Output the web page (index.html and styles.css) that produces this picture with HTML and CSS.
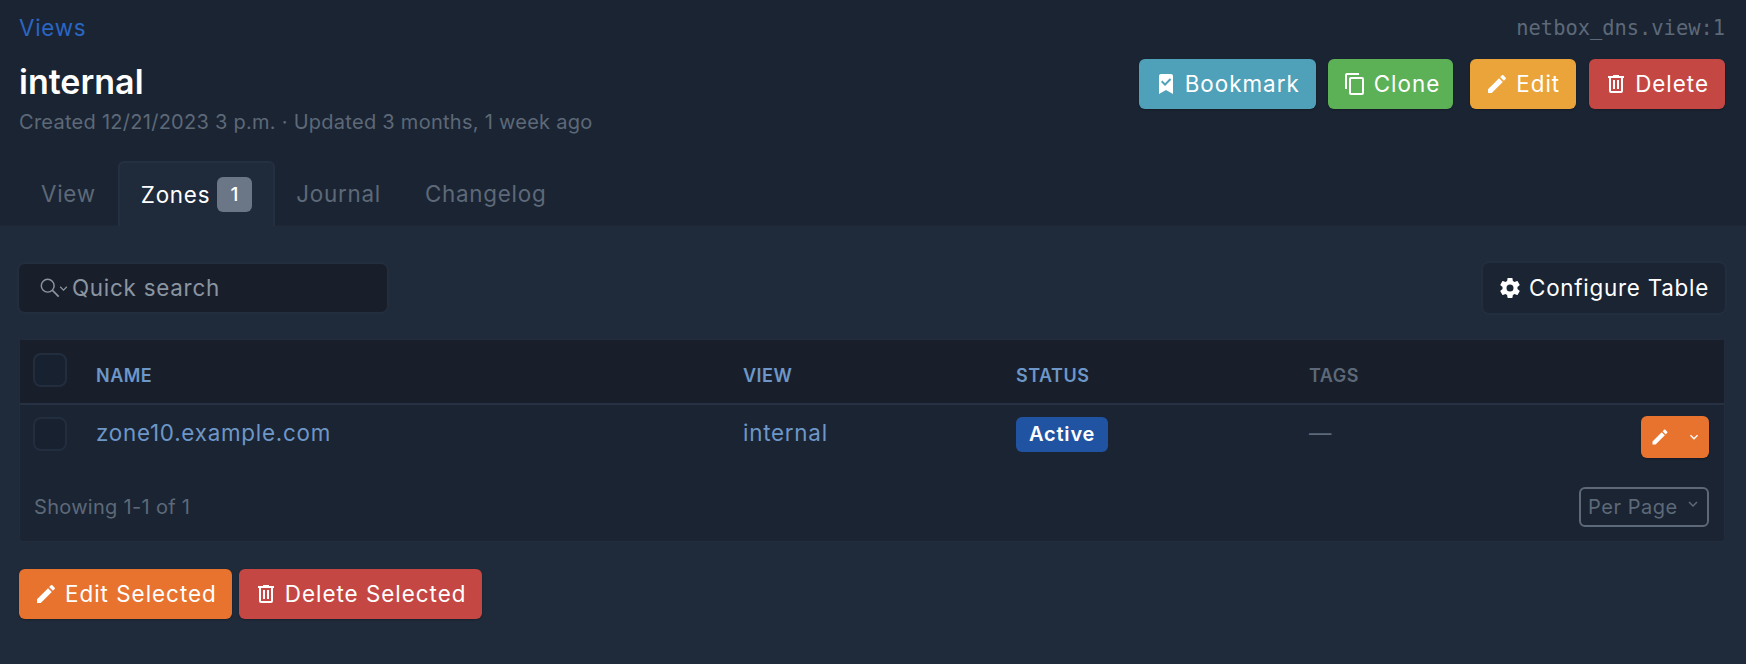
FILE: index.html
```html
<!DOCTYPE html>
<html lang="en">
<head>
    <meta charset="UTF-8">
    <meta name="viewport" content="width=device-width, initial-scale=1.0">
    <title>internal - Views</title>
    <link rel="stylesheet" href="styles.css">
</head>
<body>
    <svg class="icon-defs" xmlns="http://www.w3.org/2000/svg">
        <symbol id="i-pencil" viewBox="0 0 24 24"><path d="M20.71,7.04C21.1,6.65 21.1,6 20.71,5.63L18.37,3.29C18,2.9 17.35,2.9 16.96,3.29L15.12,5.12L18.87,8.87M3,17.25V21H6.75L17.81,9.93L14.06,6.18L3,17.25Z"/></symbol>
        <symbol id="i-trash" viewBox="0 0 24 24"><path d="M9,3V4H4V6H5V19A2,2 0 0,0 7,21H17A2,2 0 0,0 19,19V6H20V4H15V3H9M7,6H17V19H7V6M9,8V17H11V8H9M13,8V17H15V8H13Z"/></symbol>
        <symbol id="i-copy" viewBox="0 0 24 24"><path d="M19,21H8V7H19M19,5H8A2,2 0 0,0 6,7V21A2,2 0 0,0 8,23H19A2,2 0 0,0 21,21V7A2,2 0 0,0 19,5M16,1H4A2,2 0 0,0 2,3V17H4V3H16V1Z"/></symbol>
        <symbol id="i-bookmark" viewBox="0 0 24 24"><path d="M17,2A2,2 0 0,1 19,4V22L12,18L5,22V4C5,2.89 5.9,2 7,2H17M11,14L17.25,7.76L15.84,6.34L11,11.18L8.41,8.59L7,10L11,14Z"/></symbol>
        <symbol id="i-cog" viewBox="0 0 24 24"><path d="M12,15.5A3.5,3.5 0 0,1 8.5,12A3.5,3.5 0 0,1 12,8.5A3.5,3.5 0 0,1 15.5,12A3.5,3.5 0 0,1 12,15.5M19.43,12.97C19.47,12.65 19.5,12.33 19.5,12C19.5,11.67 19.47,11.34 19.43,11L21.54,9.37C21.73,9.22 21.78,8.95 21.66,8.73L19.66,5.27C19.54,5.05 19.27,4.96 19.05,5.05L16.56,6.05C16.04,5.66 15.5,5.32 14.87,5.07L14.5,2.42C14.46,2.18 14.25,2 14,2H10C9.75,2 9.54,2.18 9.5,2.42L9.13,5.07C8.5,5.32 7.96,5.66 7.44,6.05L4.95,5.05C4.73,4.96 4.46,5.05 4.34,5.27L2.34,8.73C2.21,8.95 2.27,9.22 2.46,9.37L4.57,11C4.53,11.34 4.5,11.67 4.5,12C4.5,12.33 4.53,12.65 4.57,12.97L2.46,14.63C2.27,14.78 2.21,15.05 2.34,15.27L4.34,18.73C4.46,18.95 4.73,19.03 4.95,18.95L7.44,17.94C7.96,18.34 8.5,18.68 9.13,18.93L9.5,21.58C9.54,21.82 9.75,22 10,22H14C14.25,22 14.46,21.82 14.5,21.58L14.87,18.93C15.5,18.67 16.04,18.34 16.56,17.94L19.05,18.95C19.27,19.03 19.54,18.95 19.66,18.73L21.66,15.27C21.78,15.05 21.73,14.78 21.54,14.63L19.43,12.97Z"/></symbol>
        <symbol id="i-search" viewBox="0 0 24 24"><circle cx="9.5" cy="9.5" r="7" fill="none" stroke="currentColor" stroke-width="1.6"/><path d="M14.7,14.7L21.5,21.5" fill="none" stroke="currentColor" stroke-width="1.9"/></symbol>
        <symbol id="i-chevron" viewBox="0 0 24 24"><path d="M7.41,8.58L12,13.17L16.59,8.58L18,10L12,16L6,10L7.41,8.58Z"/></symbol>
    </svg>

    <header class="page-header">
        <div class="crumbs">
            <a class="crumb-link" href="#">Views</a>
            <code class="object-id">netbox_dns.view:1</code>
        </div>
        <div class="title-row">
            <div>
                <h1 class="page-title">internal</h1>
                <p class="page-meta">Created 12/21/2023 3 p.m. · Updated 3 months, 1 week ago</p>
            </div>
            <div class="actions">
                <a class="btn btn-bookmark" href="#"><svg class="icon"><use href="#i-bookmark"/></svg>Bookmark</a>
                <a class="btn btn-clone" href="#"><svg class="icon"><use href="#i-copy"/></svg>Clone</a>
                <a class="btn btn-edit" href="#"><svg class="icon"><use href="#i-pencil"/></svg>Edit</a>
                <a class="btn btn-delete" href="#"><svg class="icon"><use href="#i-trash"/></svg>Delete</a>
            </div>
        </div>
        <nav class="tabs">
            <a class="tab" href="#">View</a>
            <a class="tab tab-active" href="#">Zones <span class="tab-count">1</span></a>
            <a class="tab" href="#">Journal</a>
            <a class="tab" href="#">Changelog</a>
        </nav>
    </header>

    <main class="content">
        <div class="toolbar">
            <div class="search">
                <svg class="search-icon"><use href="#i-search"/></svg>
                <svg class="search-caret"><use href="#i-chevron"/></svg>
                <span>Quick search</span>
            </div>
            <a class="btn btn-dark" href="#"><svg class="icon"><use href="#i-cog"/></svg>Configure Table</a>
        </div>

        <div class="card">
            <table class="zones">
                <thead>
                    <tr>
                        <th class="col-check"><span class="checkbox"></span></th>
                        <th class="col-name">Name</th>
                        <th class="col-view">View</th>
                        <th class="col-status">Status</th>
                        <th class="col-tags muted-head">Tags</th>
                        <th></th>
                    </tr>
                </thead>
                <tbody>
                    <tr>
                        <td><span class="checkbox checkbox-row"></span></td>
                        <td><a href="#">zone10.example.com</a></td>
                        <td><a href="#">internal</a></td>
                        <td><span class="badge">Active</span></td>
                        <td class="dash">—</td>
                        <td class="row-actions">
                            <a class="row-btn" href="#">
                                <svg class="row-pencil"><use href="#i-pencil"/></svg>
                                <svg class="row-chevron"><use href="#i-chevron"/></svg>
                            </a>
                        </td>
                    </tr>
                </tbody>
            </table>
            <div class="card-footer">
                <span class="showing">Showing 1-1 of 1</span>
                <span class="per-page">Per Page<svg class="per-chevron"><use href="#i-chevron"/></svg></span>
            </div>
        </div>

        <div class="bulk">
            <a class="btn btn-orange" href="#"><svg class="icon"><use href="#i-pencil"/></svg>Edit Selected</a>
            <a class="btn btn-delete" href="#"><svg class="icon"><use href="#i-trash"/></svg>Delete Selected</a>
        </div>
    </main>
</body>
</html>
```

FILE: styles.css
```css
* {
    box-sizing: border-box;
}
html, body {
    height: 100%;
}
body {
    margin: 0;
    font-family: Inter, "Liberation Sans", sans-serif;
    font-size: 22.4px;
    line-height: 1.5;
    letter-spacing: 0.75px;
    background-color: #1f2a3a;
    color: #fff;
}
a {
    text-decoration: none;
}
.icon-defs {
    display: none;
}

/* header */
.page-header {
    background: #1b2433;
    height: 226px;
    padding: 0 21px 0 19px;
    border-bottom: 1px solid #1d2736;
    position: relative;
}
.crumbs {
    display: flex;
    justify-content: space-between;
    align-items: center;
    height: 56px;
}
.crumb-link {
    color: #2a66c2;
}
.object-id {
    font-family: "DejaVu Sans Mono", monospace;
    font-size: 20.4px;
    letter-spacing: 0;
    color: #5d6978;
}
.title-row {
    display: flex;
    justify-content: space-between;
    align-items: flex-start;
    height: 105px;
}
.page-title {
    margin: 2px 0 1px;
    font-size: 34px;
    font-weight: 600;
    letter-spacing: 0;
    line-height: 48px;
}
.page-meta {
    margin: 0;
    font-size: 20px;
    letter-spacing: 0.27px;
    line-height: 30px;
    color: #5d6978;
}
.actions {
    display: flex;
    gap: 12px;
    margin-top: 3px;
}
.btn {
    display: inline-flex;
    align-items: center;
    height: 50px;
    padding: 0 16px 0 15px;
    border-radius: 6px;
    color: #fff;
    letter-spacing: 1px;
    white-space: nowrap;
    box-shadow: 0 1px 2px rgba(0, 0, 0, 0.25);
}
.icon {
    width: 24px;
    height: 24px;
    margin-right: 7px;
    fill: currentColor;
    flex: none;
}
.btn-bookmark { background: #4ea1b9; }
.btn-clone {
    background: #5cb157;
    padding: 0 13px 0 15px;
}
.btn-edit {
    background: #eaa43a;
    margin: 0 1px 0 5px;
}
.btn-delete { background: #c54743; }
.btn-orange { background: #e8732f; }
.btn-dark {
    background: #1b2433;
    letter-spacing: 0.75px;
    box-shadow: 0 0 0 2px #222d3e;
}

/* tabs */
.tabs {
    display: flex;
    position: absolute;
    left: 19px;
    bottom: -1px;
    height: 65px;
}
.tab {
    display: flex;
    align-items: center;
    padding: 0 22px;
    color: #5d6978;
}
.tab-active {
    padding: 0 21px;
    margin-right: -1px;
    color: #fff;
    background: #1f2a3a;
    border: 2px solid #243042;
    border-bottom: 0;
    border-radius: 6px 6px 0 0;
}
.tab-count {
    display: inline-block;
    margin-left: 7px;
    width: 35px;
    height: 35px;
    line-height: 35px;
    text-align: center;
    font-size: 19px;
    font-weight: 500;
    border-radius: 6px;
    background: #6b7686;
}

/* content */
.content {
    padding: 37px 21px 0 19px;
}
.toolbar {
    display: flex;
    justify-content: space-between;
    align-items: center;
    height: 50px;
}
.search {
    display: flex;
    align-items: center;
    width: 368px;
    height: 48px;
    padding-left: 20px;
    border-radius: 6px;
    background: #181f2b;
    box-shadow: 0 0 0 2px #222d3e;
    color: #8b95a1;
}
.search-icon {
    width: 22px;
    height: 22px;
    color: #8b95a1;
    flex: none;
}
.search-caret {
    width: 15px;
    height: 15px;
    margin: 0 1px 0 -5px;
    fill: #8b95a1;
    flex: none;
}
.card {
    margin-top: 26px;
    background: #1b2433;
    border: 1px solid #222c3c;
    border-radius: 4px;
}
.zones {
    width: 100%;
    table-layout: fixed;
    border-collapse: collapse;
}
.zones th {
    height: 64px;
    padding: 8px 15px 0;
    text-align: left;
    font-size: 18px;
    font-weight: 600;
    letter-spacing: 0.5px;
    text-transform: uppercase;
    color: #6d97c8;
    background: #181f2b;
    border-bottom: 2px solid #263244;
}
.zones th.col-check {
    padding: 0 15px 4px;
}
.zones th.muted-head {
    color: #5d6978;
}
.zones td {
    height: 68px;
    padding: 11px 15px 0;
    vertical-align: top;
    color: #6d97c8;
}
.zones a {
    color: #6d97c8;
}
.col-check { width: 61px; }
.col-name { width: 647px; }
.col-view { width: 273px; }
.col-status { width: 293px; }
.col-tags { width: 180px; }
.checkbox {
    display: block;
    width: 30px;
    height: 30px;
    border-radius: 6px;
    background: #182130;
    box-shadow: 0 0 0 2px #222d3e;
}
.checkbox-row {
    margin-top: 3px;
}
.badge {
    display: inline-block;
    height: 35px;
    line-height: 35px;
    padding: 0 13px;
    border-radius: 6px;
    background: #2153a3;
    color: #fff;
    font-size: 20px;
    font-weight: 600;
    letter-spacing: 0.8px;
}
.zones td.dash {
    color: #5d6978;
}
.zones td.row-actions {
    text-align: right;
}
.row-btn {
    display: inline-flex;
    align-items: center;
    justify-content: space-between;
    width: 68px;
    height: 42px;
    padding: 0 7px 0 9px;
    border-radius: 6px;
    background: #e8732f;
    box-shadow: 0 1px 2px rgba(0, 0, 0, 0.25);
}
.row-pencil {
    width: 20px;
    height: 20px;
    fill: #fff;
}
.row-chevron {
    width: 16px;
    height: 16px;
    fill: #fff;
}
.card-footer {
    display: flex;
    justify-content: space-between;
    align-items: center;
    height: 69px;
    padding: 0 15px 0 14px;
}
.showing {
    font-size: 20px;
    letter-spacing: 0.3px;
    color: #5d6978;
}
.per-page {
    display: flex;
    align-items: center;
    justify-content: space-between;
    width: 130px;
    height: 40px;
    padding: 0 5px 0 7px;
    border: 2px solid #5d6978;
    border-radius: 6px;
    font-size: 20px;
    letter-spacing: 0.55px;
    color: #5d6978;
}
.per-chevron {
    width: 18px;
    height: 18px;
    margin-top: -5px;
    fill: #5d6978;
}
.bulk {
    display: flex;
    gap: 7px;
    margin-top: 27px;
}
.bulk .btn {
    padding-right: 15px;
}
```
